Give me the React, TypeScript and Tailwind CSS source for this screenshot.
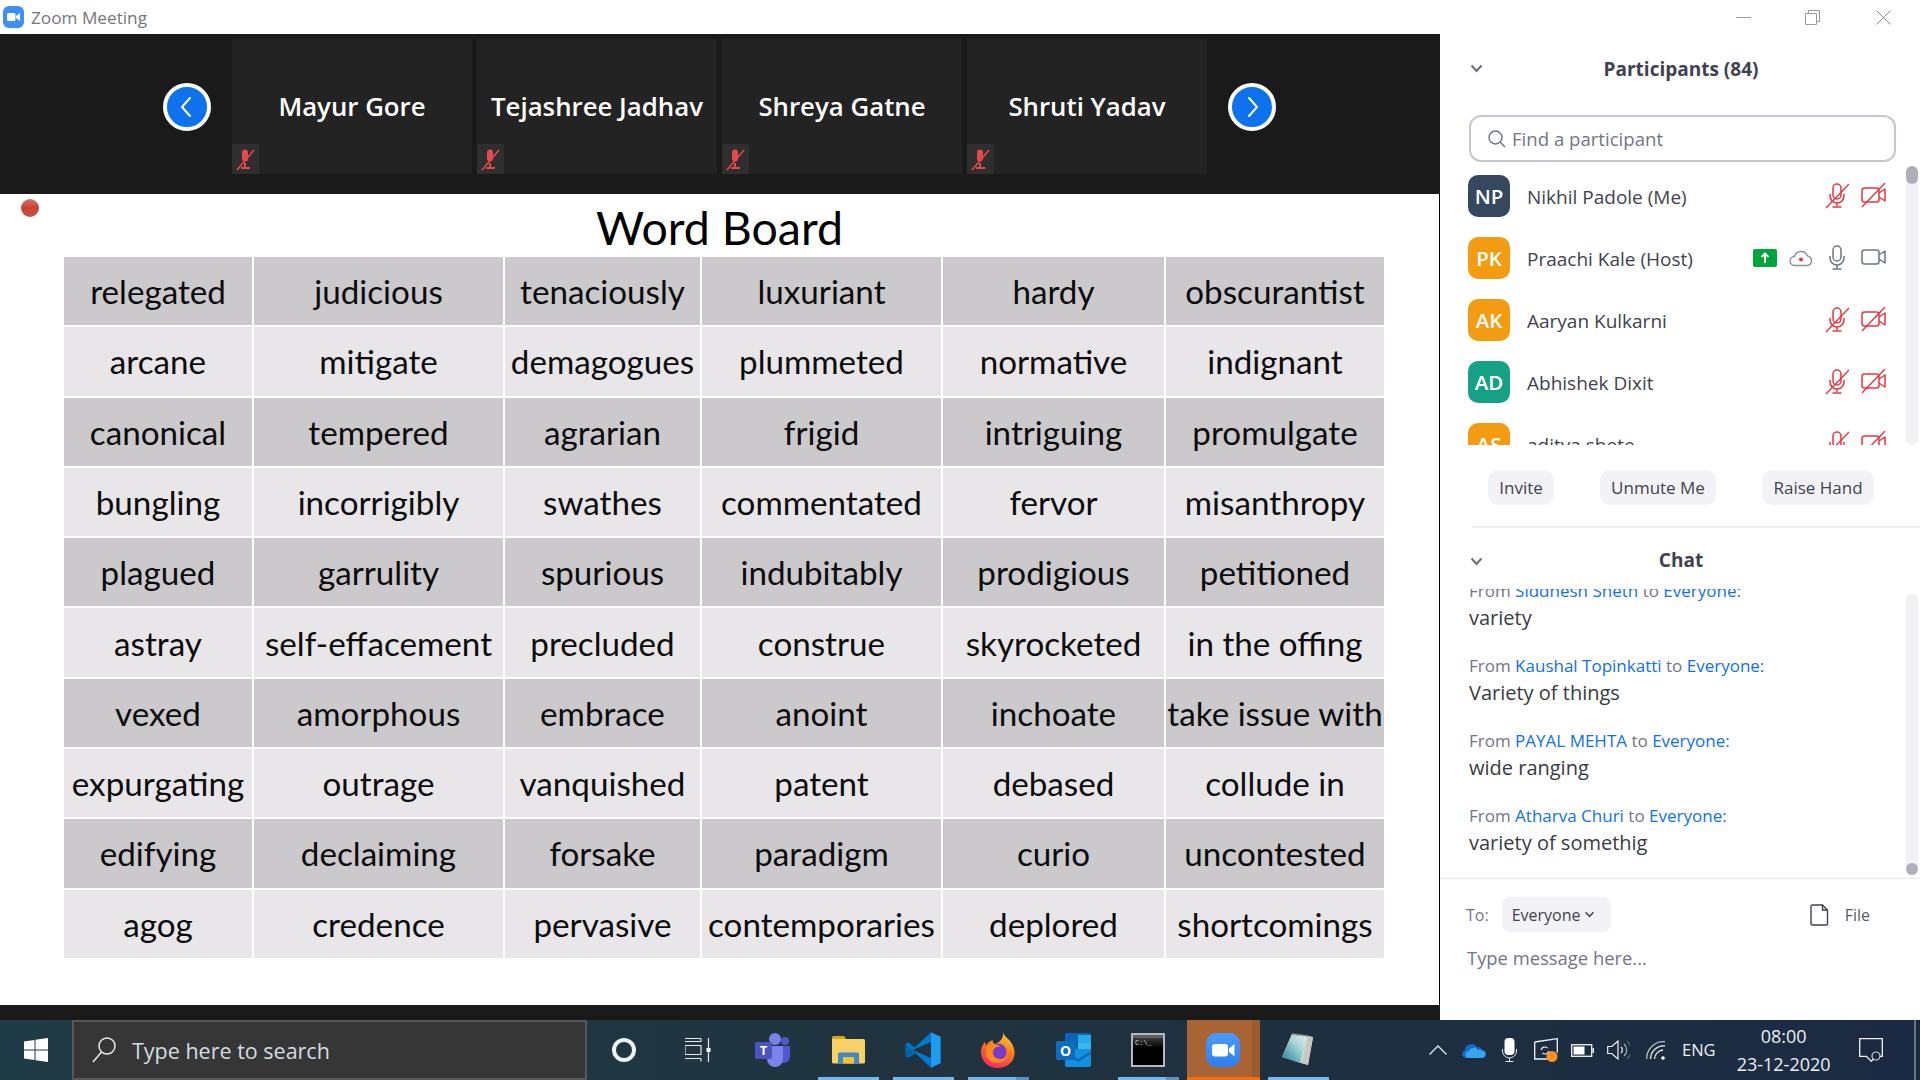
import React from "react";

const WORDS = [
  ["relegated", "judicious", "tenaciously", "luxuriant", "hardy", "obscurantist"],
  ["arcane", "mitigate", "demagogues", "plummeted", "normative", "indignant"],
  ["canonical", "tempered", "agrarian", "frigid", "intriguing", "promulgate"],
  ["bungling", "incorrigibly", "swathes", "commentated", "fervor", "misanthropy"],
  ["plagued", "garrulity", "spurious", "indubitably", "prodigious", "petitioned"],
  ["astray", "self-effacement", "precluded", "construe", "skyrocketed", "in the offing"],
  ["vexed", "amorphous", "embrace", "anoint", "inchoate", "take issue with"],
  ["expurgating", "outrage", "vanquished", "patent", "debased", "collude in"],
  ["edifying", "declaiming", "forsake", "paradigm", "curio", "uncontested"],
  ["agog", "credence", "pervasive", "contemporaries", "deplored", "shortcomings"],
];

const TILES = ["Mayur Gore", "Tejashree Jadhav", "Shreya Gatne", "Shruti Yadav"];

function MutedBadgeIcon() {
  return (
    <svg width="20" height="22" viewBox="0 0 20 22" fill="none">
      <path d="M7 2.500a3 3 0 0 1 6 0v6a3 3 0 0 1-6 0z" fill="#e5484d" transform="translate(-1 1)" />
      <path d="M9 14v4M5 19h9" stroke="#e5484d" strokeWidth="2" />
      <path d="M1 21 18 1" stroke="#e5484d" strokeWidth="1.600" />
    </svg>
  );
}

function Tile({ name }: { name: string }) {
  return (
    <div className="relative w-[240px] h-[135px] bg-[#232323] flex items-center justify-center">
      <span className="text-white text-[25.800px] font-semibold pb-[1px] whitespace-nowrap">{name}</span>
      <div className="absolute left-0 bottom-0 w-[27px] h-[30px] bg-[#2f2f2f] flex items-center justify-center pt-[2px]">
        <MutedBadgeIcon />
      </div>
    </div>
  );
}

function NavButton({ dir }: { dir: "l" | "r" }) {
  return (
    <div className="w-[48px] h-[48px] rounded-full bg-[#0e72ed] border-[4px] border-white flex items-center justify-center shrink-0">
      <svg width="16" height="24" viewBox="0 0 16 24" fill="none">
        <path d={dir === "l" ? "M11 3 3 12l8 9" : "M5 3l8 9-8 9"} stroke="white" strokeWidth="2" strokeLinecap="round" strokeLinejoin="round" />
      </svg>
    </div>
  );
}

function MicIcon({ off }: { off?: boolean }) {
  const c = off ? "#e8373f" : "#6e7680";
  return (
    <svg width="24" height="26" viewBox="0 0 24 26" fill="none">
      <rect x="8" y="1" width="8" height="15" rx="4" stroke={c} strokeWidth="1.500" />
      <path d="M5 11v2a7 7 0 0 0 14 0v-2M12 20v3M7.500 24h9" stroke={c} strokeWidth="1.500" />
      {off && <path d="M1 25 24 1" stroke={c} strokeWidth="1.400" />}
    </svg>
  );
}

function VideoIcon({ off }: { off?: boolean }) {
  const c = off ? "#e8373f" : "#6e7680";
  return (
    <svg width="25" height="26" viewBox="0 0 25 26" fill="none">
      <rect x="1" y="5" width="17" height="14" rx="2.500" stroke={c} strokeWidth="1.500" />
      <path d="M18 10l6-4v12l-6-4" stroke={c} strokeWidth="1.500" strokeLinejoin="round" />
      {off && <path d="M1 24 24 0" stroke={c} strokeWidth="1.400" />}
    </svg>
  );
}

function Person({
  initials,
  color,
  name,
  host,
}: {
  initials: string;
  color: string;
  name: string;
  host?: boolean;
}) {
  return (
    <div className="h-[62px] flex items-center pl-[28px] pr-[20px] shrink-0">
      <div
        className={`w-[42px] h-[42px] rounded-[10px] flex items-center justify-center text-white text-[20.500px] font-semibold ${color}`}
      >
        {initials}
      </div>
      <div className="ml-[17px] pt-[3px] text-[19px] text-[#3f4250] flex-1 whitespace-nowrap">{name}</div>
      {host && (
        <div className="flex items-center mr-[12px] gap-[12px]">
          <div className="w-[24px] h-[18px] bg-[#00a53c] rounded-[2px] flex items-center justify-center">
            <svg width="10" height="12" viewBox="0 0 10 12" fill="none">
              <path d="M5 11V2M1.500 5 5 1.500 8.500 5" stroke="white" strokeWidth="2" />
            </svg>
          </div>
          <svg width="24" height="18" viewBox="0 0 24 18" fill="none">
            <path
              d="M6 16.500a4.500 4.500 0 0 1-.7-9A7 7 0 0 1 18.500 7a4.800 4.800 0 0 1-.5 9.500z"
              stroke="#8a8f98"
              strokeWidth="1.400"
            />
            <circle cx="12" cy="10.500" r="2" fill="#f0333c" />
          </svg>
        </div>
      )}
      <div className="flex items-center gap-[12px]">
        <MicIcon off={!host} />
        <VideoIcon off={!host} />
      </div>
    </div>
  );
}

function Message({ from, text }: { from: string; text: string }) {
  return (
    <div className="h-[75px] shrink-0">
      <div className="text-[17px] leading-[27px] text-[#747487] whitespace-nowrap">
        From <span className="text-[#0e71eb]">{from}</span> to <span className="text-[#0e71eb]">Everyone:</span>
      </div>
      <div className="text-[20px] leading-[27px] text-[#3a3a44]">{text}</div>
    </div>
  );
}

function Chevron() {
  return (
    <svg width="13" height="9" viewBox="0 0 13 9" fill="none">
      <path d="M1.500 1.500 6.500 7l5-5.500" stroke="#6b6b7b" strokeWidth="2" />
    </svg>
  );
}

function Slot({
  children,
  line,
  split,
}: {
  children: React.ReactNode;
  line?: boolean;
  split?: boolean;
}) {
  return (
    <div className="relative w-[75px] h-full flex items-center justify-center shrink-0 pb-[1px] pr-[1px]">
      {children}
      {line && (
        <div className="absolute left-[7px] right-[7px] bottom-0 h-[3px] bg-[#76b9ed] flex justify-end">
          {split && <div className="w-[13px] h-full bg-[#5c92bd]" />}
        </div>
      )}
    </div>
  );
}

function TeamsIcon() {
  return (
    <svg width="36" height="34" viewBox="0 0 36 34">
      <circle cx="20" cy="6" r="6" fill="#7b83eb" />
      <circle cx="30" cy="8" r="4" fill="#5059c9" />
      <path d="M24 13h11v11a6 6 0 0 1-6 6h-5z" fill="#5059c9" />
      <path d="M11 13h17v13a8 8 0 0 1-16 0z" fill="#7b83eb" />
      <rect x="0" y="9" width="17" height="17" rx="2" fill="#4b53bc" />
      <text x="8.500" y="22" textAnchor="middle" fill="white" fontSize="13" fontWeight="700" fontFamily="Open Sans, sans-serif">T</text>
    </svg>
  );
}

function FolderIcon() {
  return (
    <svg width="33" height="28" viewBox="0 0 33 28">
      <path d="M0 1.500A1.500 1.500 0 0 1 1.500 0H12l3 4h-15z" fill="#d9a514" />
      <path d="M0 3h31.500A1.500 1.500 0 0 1 33 4.500V26a1.500 1.500 0 0 1-1.500 1.500h-30A1.500 1.500 0 0 1 0 26z" fill="#f9d064" />
      <path d="M6 27.500V18a1.500 1.500 0 0 1 1.500-1.500h18A1.500 1.500 0 0 1 27 18v9.500h-5V21H11v6.500z" fill="#3d8ac9" />
      <rect x="11" y="21" width="11" height="6.500" fill="#f2c233" />
    </svg>
  );
}

function VsCodeIcon() {
  return (
    <svg width="36" height="36" viewBox="0 0 100 100">
      <path d="M72 1 99 13V87L72 99 72 28 72 1Z" fill="#1f9cf0" />
      <path d="M72 1 27 43 9 29 1 33 72 99V72L22 50 72 28Z" fill="#007acc" />
      <path d="M1 33 22 50 1 67ZM1 67 9 71 27 57 40 68 72 99 27 57 9 71Z" fill="#0065a9" />
      <path d="M1 67 22 50 32 58 9 72Z" fill="#0065a9" />
    </svg>
  );
}

function FirefoxIcon() {
  return (
    <svg width="34" height="36" viewBox="0 0 34 36">
      <defs>
        <linearGradient id="ffa" x1="0.7" y1="0" x2="0.3" y2="1">
          <stop offset="0" stopColor="#ffd02c" />
          <stop offset="0.45" stopColor="#ff7a18" />
          <stop offset="1" stopColor="#f5256a" />
        </linearGradient>
      </defs>
      <path d="M22 0c1 5 6 6 9 12 3 5 3 10 2 13-2 7-9 11-16 11C7 36 0 29 0 20c0-5 2-8 4-10l1 4c1-3 4-5 7-6-1 2 0 3 2 4 5-2 9-6 8-12z" fill="url(#ffa)" />
      <circle cx="17" cy="20" r="8.500" fill="#7a3bc8" />
      <path d="M7 14c4-3 10-2 13 1-5-1-7 1-8 4-1 4 2 8 7 8 4 0 7-2 8-5 0 6-6 9-11 9-7 0-12-6-11-12 0-2 1-4 2-5z" fill="#ff8a1e" />
    </svg>
  );
}

function OutlookIcon() {
  return (
    <svg width="35" height="34" viewBox="0 0 35 34">
      <path d="M9 1.500A1.500 1.500 0 0 1 10.500 0H33a2 2 0 0 1 2 2v14H9z" fill="#0a64b8" />
      <rect x="22" y="2" width="13" height="8" fill="#29a8ea" />
      <rect x="22" y="10" width="13" height="7" fill="#50d9ff" opacity="0.7" />
      <path d="M9 16h26v16a2 2 0 0 1-2 2H11a2 2 0 0 1-2-2z" fill="#1490df" />
      <path d="M9 18l13 8 13-8v3L22 29 9 21z" fill="#0d6cb8" />
      <rect x="0" y="8" width="19" height="19" rx="2" fill="#0f6cbd" />
      <text x="9.500" y="22.500" textAnchor="middle" fill="white" fontSize="14" fontWeight="700" fontFamily="Open Sans, sans-serif">O</text>
    </svg>
  );
}

function CmdIcon() {
  return (
    <div className="w-[34px] h-[34px] bg-[#000] border-[2px] border-[#b5b8ba] flex flex-col">
      <div className="h-[3px] bg-[#5a5f63]" />
      <div className="text-[7px] leading-[10px] text-[#d8d8d8] pl-[2px] font-['Liberation_Mono',monospace] bg-gradient-to-b from-[#3c3c3c] to-[#000] h-[14px]">C:\_</div>
    </div>
  );
}

function ZoomTaskIcon() {
  return (
    <svg width="34" height="34" viewBox="0 0 34 34">
      <defs>
        <linearGradient id="zg" x1="0" y1="0" x2="0" y2="1">
          <stop offset="0" stopColor="#4a9bfa" />
          <stop offset="1" stopColor="#2d7ff0" />
        </linearGradient>
      </defs>
      <rect width="34" height="34" rx="10" fill="url(#zg)" />
      <rect x="6" y="11" width="16" height="12.500" rx="3" fill="white" />
      <path d="M23 15.500 28.500 11v12.500L23 19z" fill="white" />
    </svg>
  );
}

function NotepadIcon() {
  return (
    <svg width="34" height="34" viewBox="0 0 34 34">
      <defs>
        <linearGradient id="npg" x1="0" y1="1" x2="1" y2="0">
          <stop offset="0" stopColor="#1c7e94" />
          <stop offset="0.6" stopColor="#a9d6d8" />
          <stop offset="1" stopColor="#e7efe9" />
        </linearGradient>
      </defs>
      <path d="M11 1 32 4 27 32 1 24Z" fill="#dfe6df" />
      <path d="M11 1 27 3 19 30 1 24Z" fill="url(#npg)" />
      <path d="M27 3 32 4 27 32 20 30Z" fill="#c9c8c0" />
      <path d="M11 1 27 3" stroke="#888" strokeWidth="2" strokeDasharray="2 1.500" />
    </svg>
  );
}

export default function App() {
  return (
    <div
      className="w-[1920px] h-[1080px] overflow-hidden flex flex-col bg-white"
      style={{ fontFamily: "'Open Sans', 'Noto Sans', sans-serif" }}
    >
      {/* Title bar */}
      <div className="h-[34px] shrink-0 flex items-center bg-white">
        <svg className="ml-[3px]" width="21" height="22" viewBox="0 0 21 22">
          <rect width="21" height="22" rx="6" fill="#3d8ffa" />
          <rect x="4" y="7" width="8.500" height="8" rx="1.500" fill="white" />
          <path d="M13 10 17 7v8l-4-3z" fill="white" />
        </svg>
        <span className="ml-[7px] pt-[1px] text-[17.200px] text-[#777] whitespace-nowrap">Zoom Meeting</span>
        <div className="ml-auto flex items-center pr-[29px]">
          <svg width="15" height="15" viewBox="0 0 15 15" fill="none">
            <path d="M0 7.500h15" stroke="#9a9a9a" />
          </svg>
          <svg className="ml-[54px]" width="15" height="15" viewBox="0 0 15 15" fill="none">
            <path d="M.5 3.500h11v11H.5zM3.500 3.500V.5h11v11h-3" stroke="#9a9a9a" />
          </svg>
          <svg className="ml-[56px]" width="15" height="15" viewBox="0 0 15 15" fill="none">
            <path d="M.5.5l14 14M14.500.5l-14 14" stroke="#8a8a8a" />
          </svg>
        </div>
      </div>

      <div className="flex-1 flex min-h-0">
        {/* Left: meeting */}
        <div className="w-[1440px] shrink-0 flex flex-col">
          <div className="h-[160px] shrink-0 bg-[#1a1a1a] flex pl-[163px] items-start">
            <div className="mt-[49px]">
              <NavButton dir="l" />
            </div>
            <div className="ml-[21px] mt-[5px] flex gap-[5px]">
              {TILES.map((t) => (
                <Tile key={t} name={t} />
              ))}
            </div>
            <div className="ml-[21px] mt-[49px]">
              <NavButton dir="r" />
            </div>
          </div>
          <div
            className="relative h-[811px] shrink-0 bg-white border-r border-black pl-[64px]"
            style={{ fontFamily: "Lato, 'Open Sans', sans-serif" }}
          >
            <div className="absolute left-[21px] top-[5px] w-[18px] h-[18px] rounded-full bg-gradient-to-b from-[#c9736a] via-[#cf3d2e] to-[#b9584c]" />
            <div className="h-[63px] w-[1320px] flex items-center justify-center text-[46.500px] leading-none text-black pt-[3px] pr-[9px]">
              Word Board
            </div>
            <div className="grid grid-cols-[188px_249px_195px_239px_221px_218px] gap-[2px] w-[1320px]">
              {WORDS.flatMap((row, r) =>
                row.map((w) => (
                  <div
                    key={r + w}
                    className={`h-[68.300px] flex items-center justify-center text-[33.200px] leading-none text-[#0c0c0c] whitespace-nowrap pt-[1px] ${
                      r % 2 === 0 ? "bg-[#cbc9cc]" : "bg-[#e8e6e9]"
                    }`}
                  >
                    {w}
                  </div>
                ))
              )}
            </div>
          </div>
          <div className="flex-1 bg-[#1a1a1a]" />
        </div>

        {/* Right panel */}
        <div className="flex-1 flex flex-col bg-white min-w-0">
          <div className="relative h-[81px] shrink-0 flex items-center justify-center pb-[11px]">
            <div className="absolute left-[30px] top-[30px]">
              <Chevron />
            </div>
            <span className="text-[19px] font-bold text-[#3f4250] pl-[2px]">Participants (84)</span>
          </div>
          <div className="ml-[29px] w-[427px] h-[47px] shrink-0 border-2 border-[#c6c6d6] rounded-[12px] flex items-center pl-[16px]">
            <svg width="20" height="20" viewBox="0 0 20 20" fill="none">
              <circle cx="8.500" cy="8.500" r="6.500" stroke="#6b7280" strokeWidth="1.400" />
              <path d="M13.500 13.500 18 18" stroke="#6b7280" strokeWidth="1.400" />
            </svg>
            <span className="ml-[5px] pt-[1px] text-[18.600px] text-[#747487]">Find a participant</span>
          </div>
          <div className="mt-[3px] h-[280px] shrink-0 flex overflow-hidden">
            <div className="w-[466px] flex flex-col">
              <Person initials="NP" color="bg-[#34495e]" name="Nikhil Padole (Me)" />
              <Person initials="PK" color="bg-[#f39c12]" name="Praachi Kale (Host)" host />
              <Person initials="AK" color="bg-[#f39c12]" name="Aaryan Kulkarni" />
              <Person initials="AD" color="bg-[#16a085]" name="Abhishek Dixit" />
              <Person initials="AS" color="bg-[#f39c12]" name="aditya shete" />
            </div>
            <div className="mt-[1px] w-[12px] h-[279px] bg-[#f0f0f5] rounded-[6px]">
              <div className="h-[18px] bg-[#afafba] rounded-[6px]" />
            </div>
          </div>
          <div className="mt-[25px] ml-[48px] flex gap-[46px] h-[35px] shrink-0">
            <div className="w-[66px] rounded-[10px] bg-[#f3f3f7] flex items-center justify-center text-[17px] text-[#3f4250]">Invite</div>
            <div className="w-[116px] rounded-[10px] bg-[#f3f3f7] flex items-center justify-center text-[17px] text-[#3f4250] whitespace-nowrap">Unmute Me</div>
            <div className="w-[112px] rounded-[10px] bg-[#f3f3f7] flex items-center justify-center text-[17px] text-[#3f4250] whitespace-nowrap">Raise Hand</div>
          </div>
          <div className="mt-[21px] ml-[32px] h-[2px] shrink-0 bg-[#eeeef2]" />
          <div className="relative h-[61px] shrink-0 flex items-center justify-center pt-[4px]">
            <div className="absolute left-[30px] top-[29px]">
              <Chevron />
            </div>
            <span className="text-[19px] font-bold text-[#3f4250] pl-[2px]">Chat</span>
          </div>
          <div className="h-[289px] shrink-0 flex overflow-hidden">
            <div className="w-[466px] pl-[29px] -mt-[12px]">
              <Message from="Siddhesh Sheth" text="variety" />
              <Message from="Kaushal Topinkatti" text="Variety of things" />
              <Message from="PAYAL MEHTA" text="wide ranging" />
              <Message from="Atharva Churi" text="variety of somethig" />
            </div>
            <div className="mt-[5px] w-[12px] h-[281px] bg-[#f0f0f5] rounded-[6px] flex flex-col justify-end">
              <div className="h-[12px] bg-[#afafba] rounded-full" />
            </div>
          </div>
          <div className="h-px shrink-0 bg-[#e8e8ee]" />
          <div className="mt-[18px] h-[35px] shrink-0 flex items-center pl-[26px]">
            <span className="text-[16px] text-[#747487]">To:</span>
            <div className="ml-[13px] w-[109px] h-[35px] rounded-[8px] bg-[#f3f3f7] flex items-center pl-[10px] gap-[4px] text-[16px] text-[#3f4250]">
              Everyone
              <svg width="11" height="7" viewBox="0 0 13 9" fill="none">
                <path d="M1.500 1.500 6.500 7l5-5.500" stroke="#3f4250" strokeWidth="2" />
              </svg>
            </div>
            <svg className="ml-[199px]" width="20" height="22" viewBox="0 0 20 22" fill="none">
              <path d="M2.500 1h10l5 5v13.500a1.500 1.500 0 0 1-1.500 1.500H2.500A1.500 1.500 0 0 1 1 19.500v-17A1.500 1.500 0 0 1 2.500 1zM12.500 1v5h5" stroke="#3f4250" strokeWidth="1.400" />
            </svg>
            <span className="ml-[15px] text-[16px] text-[#5a5a68]">File</span>
          </div>
          <div className="mt-[12px] pl-[27px] text-[18.400px] text-[#747487]">Type message here...</div>
        </div>
      </div>

      {/* Taskbar */}
      <div className="h-[60px] shrink-0 flex items-stretch bg-gradient-to-r from-[#1f3b46] via-[#20333f] to-[#1b2a42] text-white">
        <div className="w-[72px] shrink-0 flex items-center justify-center">
          <svg width="24" height="24" viewBox="0 0 24 24">
            <path d="M0 3.500 10.500 2v9.500H0zM11.500 1.800 24 0v11.500H11.500zM0 12.500h10.500V22L0 20.500zM11.500 12.500H24V24l-12.500-1.800z" fill="white" />
          </svg>
        </div>
        <div className="w-[515px] shrink-0 bg-[#363636] border-2 border-[#575757] flex items-center pl-[17px]">
          <svg width="26" height="28" viewBox="0 0 26 28" fill="none">
            <circle cx="16" cy="10" r="8" stroke="#eaeaea" strokeWidth="1.500" />
            <path d="M10.500 16 2 26" stroke="#eaeaea" strokeWidth="1.500" />
          </svg>
          <span className="ml-[15px] pt-[2px] text-[21.500px] text-[#d4dde2] whitespace-nowrap">Type here to search</span>
        </div>
        <div className="w-[73px] shrink-0 flex items-center justify-center">
          <div className="w-[24px] h-[24px] rounded-full border-[4px] border-[#eef1f2]" />
        </div>
        <div className="w-[76px] shrink-0 flex items-center justify-center">
          <svg width="26" height="24" viewBox="0 0 26 24" fill="none">
            <path d="M0 .5h16M16 .5v3M0 3.500h16M0 7.500h16v9H0zM0 20.500h16M16 20.500v3M23.500 0v24" stroke="#e5e8ea" strokeWidth="1.200" />
            <rect x="21.500" y="10" width="4" height="4" fill="#fff" />
          </svg>
        </div>
        <Slot><TeamsIcon /></Slot>
        <Slot line><FolderIcon /></Slot>
        <Slot line><VsCodeIcon /></Slot>
        <Slot line split><FirefoxIcon /></Slot>
        <Slot><OutlookIcon /></Slot>
        <Slot line split><CmdIcon /></Slot>
        <div className="relative w-[73px] mx-[1px] shrink-0 h-full bg-[#a86435] flex items-center justify-center pb-[1px] pr-[1px]">
          <ZoomTaskIcon />
          <div className="absolute right-0 top-0 bottom-0 w-[8px] bg-[#9c5c30]" />
          <div className="absolute left-0 right-0 bottom-0 h-[3px] bg-[#ee7012]" />
        </div>
        <Slot line><NotepadIcon /></Slot>

        {/* Tray */}
        <div className="flex items-center ml-[93px]">
          <svg width="18" height="10" viewBox="0 0 18 10" fill="none">
            <path d="M.5 9.500 9 1l8.500 8.500" stroke="#e8e8e8" strokeWidth="1.300" />
          </svg>
          <svg className="ml-[15px]" width="24" height="16" viewBox="0 0 24 16">
            <path d="M4 16a4 4 0 0 1-1-7.800A6.500 6.500 0 0 1 15 5a4.500 4.500 0 0 1 5 3 4 4 0 0 1 0 8z" fill="#0f6cc8" />
            <path d="M7 16a3.500 3.500 0 0 1 0-7 5 5 0 0 1 9-1 4 4 0 0 1 4 .5 3.800 3.800 0 0 1 0 7.500z" fill="#36a5ec" />
          </svg>
          <svg className="ml-[16px]" width="15" height="24" viewBox="0 0 15 24" fill="none">
            <rect x="2.500" y="0" width="10" height="17" rx="4" fill="white" />
            <path d="M.5 11v2a7 7 0 0 0 14 0v-2M7.500 20v3.500M3.500 23.500h8" stroke="#e8e8e8" strokeWidth="1" />
          </svg>
          <svg className="ml-[17px]" width="24" height="24" viewBox="0 0 24 24" fill="none">
            <path d="M.7 4 23.300.7v14M.7 4v17h13" stroke="#f2f2f2" strokeWidth="1.300" />
            <path d="M7 12a4 4 0 0 1 6.500-2M15 13a4 4 0 0 1-6.500 2" stroke="#f2f2f2" strokeWidth="1.200" />
            <circle cx="18" cy="18.500" r="5.500" fill="#f7931e" />
          </svg>
          <svg className="ml-[13px]" width="23" height="13" viewBox="0 0 23 13" fill="none">
            <rect x=".7" y=".7" width="20" height="11.600" stroke="#f2f2f2" strokeWidth="1.300" />
            <rect x="2.500" y="2.500" width="11" height="8" fill="white" />
            <rect x="21.500" y="4" width="1.500" height="5" fill="#f2f2f2" />
          </svg>
          <svg className="ml-[13px]" width="23" height="20" viewBox="0 0 23 20" fill="none">
            <path d="M.7 6.500h4L11 1v18l-6.300-5.500h-4z" stroke="#f2f2f2" strokeWidth="1.200" />
            <path d="M14 7a4 4 0 0 1 0 6" stroke="#f2f2f2" strokeWidth="1.200" />
            <path d="M17 4a8 8 0 0 1 0 12" stroke="#aab2ba" strokeWidth="1.200" />
            <path d="M20 1a12 12 0 0 1 0 18" stroke="#5f6a78" strokeWidth="1.200" />
          </svg>
          <svg className="ml-[16px]" width="20" height="19" viewBox="0 0 20 19" fill="none">
            <path d="M.7 18A17 17 0 0 1 19 .7" stroke="#b3bac2" strokeWidth="1.300" />
            <path d="M4.500 18A13 13 0 0 1 19 5" stroke="#e8e8e8" strokeWidth="1.300" />
            <path d="M8.500 18A9.500 9.500 0 0 1 17 9" stroke="#e8e8e8" strokeWidth="1.300" />
            <circle cx="17" cy="17" r="1.800" fill="#fff" />
          </svg>
          <span className="ml-[16px] text-[16.500px] text-[#ecf0f2]">ENG</span>
        </div>
        <div className="ml-[13px] w-[110px] flex flex-col items-center justify-center text-[18px] leading-[28px] text-[#ecf0f2] pb-[1px]">
          <span>08:00</span>
          <span>23-12-2020</span>
        </div>
        <div className="ml-[20px] flex items-center">
          <svg width="24" height="24" viewBox="0 0 24 24" fill="none">
            <path d="M.7.7h22.600v17.600h-6l-5 5-5-5H.7z" stroke="#f2f2f2" strokeWidth="1.300" fill="#1b2a42" />
            <circle cx="17" cy="18" r="4" stroke="#d7d7d7" strokeWidth="1.200" fill="#1b2a42" />
          </svg>
        </div>
        <div className="ml-[31px] w-[2px] bg-[#69727f]" />
      </div>
    </div>
  );
}
